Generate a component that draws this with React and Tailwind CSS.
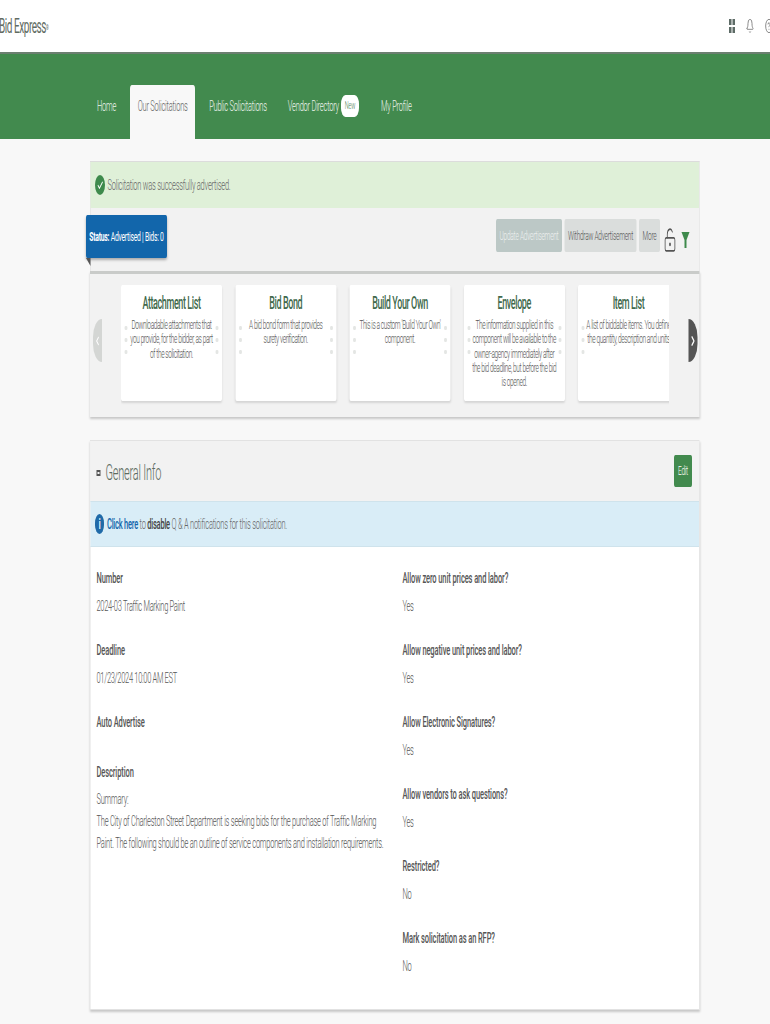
import React from "react";
import { Bell, Check, ChevronLeft, ChevronRight, CircleHelp, LockKeyholeOpen } from "lucide-react";

const cards = [
  ["Attachment List", "Downloadable attachments that\nyou provide, for the bidder, as part\nof the solicitation."],
  ["Bid Bond", "A bid bond form that provides\nsurety verification."],
  ["Build Your Own", "This is a custom 'Build Your Own'\ncomponent."],
  ["Envelope", "The information supplied in this\ncomponent will be available to the\nowner-agency immediately after\nthe bid deadline, but before the bid\nis opened."],
  ["Item List", "A list of biddable items. You define\nthe quantity, description and units"],
];

const leftFields = [
  ["Number", "2024-03 Traffic Marking Paint"],
  ["Deadline", "01/23/2024 10:00 AM EST"],
];

const rightFields = [
  ["Allow zero unit prices and labor?", "Yes"],
  ["Allow negative unit prices and labor?", "Yes"],
  ["Allow Electronic Signatures?", "Yes"],
  ["Allow vendors to ask questions?", "Yes"],
  ["Restricted?", "No"],
  ["Mark solicitation as an RFP?", "No"],
];

function Dots({ className }) {
  return (
    <div className={"absolute top-[41px] flex flex-col gap-[8px] " + className}>
      <span className="h-[4px] w-[6px] rounded-full bg-[#e4e6e4]" />
      <span className="h-[4px] w-[6px] rounded-full bg-[#e4e6e4]" />
      <span className="h-[4px] w-[6px] rounded-full bg-[#e4e6e4]" />
    </div>
  );
}

function Card({ title, text, clipped }) {
  return (
    <div className="relative h-[116px] w-[202px] shrink-0 rounded-[3px] bg-white px-[6px] pt-[8px] text-center shadow-[0_2px_3px_rgba(0,0,0,0.12)]">
      <div className="text-[18px] font-medium leading-[20px] tracking-[-0.8px] text-[#41694c]">{title}</div>
      <p className="mt-[5px] whitespace-pre-line text-[13px] font-light leading-[14.3px] tracking-[-0.75px] text-[#555]">{text}</p>
      <Dots className="left-[7px]" />
      {!clipped && <Dots className="right-[7px]" />}
    </div>
  );
}

function Field({ label, value, className }) {
  return (
    <div className={className}>
      <div className="text-[15px] font-medium leading-[20px] tracking-[-0.2px] text-[#555]">{label}</div>
      {value && <div className="mt-[8px] text-[15px] font-light leading-[20px] tracking-[-0.6px] text-[#555]">{value}</div>}
    </div>
  );
}

export default function App() {
  return (
    <div className="h-[1024px] w-[770px] overflow-hidden">
      {/* the reference is squeezed to half its width, so lay out at 1540 and scale */}
      <div className="h-[1024px] w-[1540px] origin-top-left scale-x-50 overflow-hidden bg-[#f8f8f8] font-['Roboto',sans-serif] font-light tracking-[-0.45px] text-[#555]">
        <header className="flex h-[52px] items-center justify-between bg-white">
          <div className="-ml-[2px] text-[20px] font-normal tracking-[-0.9px] text-[#5f6b62]">
            Bid Express<sup className="text-[7px]">®</sup>
          </div>
          <div className="-mr-[6px] flex items-center gap-[22px] text-[#666]">
            <svg width="12" height="14" viewBox="0 0 12 14" fill="#5d6b66">
              <rect x="0" y="0" width="5" height="6" />
              <rect x="7" y="0" width="5" height="6" />
              <rect x="0" y="8" width="5" height="6" />
              <rect x="7" y="8" width="5" height="6" />
            </svg>
            <Bell size={16} strokeWidth={1.5} />
            <CircleHelp size={16} strokeWidth={1.5} />
          </div>
        </header>

        <nav className="flex h-[87px] items-end border-t-2 border-[#6b7f70] bg-[#428a4e] pl-[176px] text-[15px] text-[#eef5ef]">
          <div className="flex h-[54px] items-center px-[18px] pb-[12px]">Home</div>
          <div className="ml-[10px] flex h-[54px] w-[130px] items-center justify-center rounded-t-[4px] bg-[#f8f8f8] pb-[12px] text-[#666]">Our Solicitations</div>
          <div className="ml-[28px] flex h-[54px] items-center pb-[12px]">Public Solicitations</div>
          <div className="ml-[42px] flex h-[54px] items-center pb-[12px]">
            Vendor Directory
            <span className="ml-[4px] flex h-[22px] w-[36px] items-center justify-center rounded-[9px] bg-white text-[11px] text-[#4a7d55]">New</span>
          </div>
          <div className="ml-[44px] flex h-[54px] items-center pb-[12px]">My Profile</div>
        </nav>

        <main className="px-[180px] pt-[22px]">
          <section className="relative w-[1219px] border-x border-t border-[#dcdcdc] bg-[#f2f2f2]">
            <div className="flex h-[46px] items-center gap-[5px] bg-[#dff0d8] pl-[9px] text-[15px] text-[#666]">
              <span className="flex h-[20px] w-[20px] items-center justify-center rounded-full bg-[#3e8a4c]">
                <Check size={13} strokeWidth={3} className="text-white" />
              </span>
              Solicitation was successfully advertised.
            </div>
            <div className="flex h-[63px] items-center justify-end gap-[5px] pr-[18px] pb-[8px] text-[13px]">
              <button className="flex h-[33px] w-[132px] items-center justify-center rounded-[3px] bg-[#bcc8c6] text-[#eef1f0]">Update Advertisement</button>
              <button className="flex h-[33px] w-[144px] items-center justify-center rounded-[3px] bg-[#dadddc] text-[#555]">Withdraw Advertisement</button>
              <button className="flex h-[33px] w-[42px] items-center justify-center rounded-[3px] bg-[#dadddc] text-[#555]">More</button>
              <LockKeyholeOpen size={26} strokeWidth={1.5} className="mt-[8px] ml-[2px] text-[#555]" />
              <svg width="18" height="18" viewBox="0 0 18 18" className="mt-[8px] ml-[4px]" fill="#3e8a4c">
                <path d="M1 1h16l-6 8v8h-4v-8z" />
              </svg>
            </div>
            <div className="absolute top-[53px] -left-[9px] flex h-[43px] w-[162px] items-center justify-center rounded-[3px] bg-[#1266ab] text-[13.5px] font-normal text-white shadow-[0_2px_4px_rgba(0,0,0,0.3)]">
              <span><b className="font-bold">Status:</b> Advertised | Bids: 0</span>
            </div>
            <div className="absolute top-[96px] -left-[9px] h-0 w-0 border-t-[8px] border-l-[9px] border-t-[#555] border-l-transparent" />
          </section>

          <section className="relative h-[146px] w-[1219px] border-t-[3px] border-[#c9cbc9] bg-[#f2f2f2] pt-[11px] pl-[62px] shadow-[0_2px_3px_rgba(0,0,0,0.2)]">
            <div className="flex w-[1096px] gap-[26.5px] overflow-hidden pb-[4px]">
              {cards.map(([title, text], i) => (
                <Card key={title} title={title} text={text} clipped={i === 4} />
              ))}
            </div>
            <div className="absolute top-[45px] left-[6px] flex h-[43px] w-[18px] items-center justify-center rounded-l-full bg-[#d4d6d4] text-white">
              <ChevronLeft size={14} strokeWidth={3} />
            </div>
            <div className="absolute top-[45px] right-[4px] flex h-[43px] w-[18px] items-center justify-center rounded-r-full bg-[#555] text-white">
              <ChevronRight size={16} strokeWidth={3} />
            </div>
          </section>

          <section className="mt-[23px] h-[570px] w-[1219px] border border-[#e2e2e2] bg-white shadow-[0_2px_3px_rgba(0,0,0,0.2)]">
            <div className="flex h-[60px] items-center justify-between bg-[#f2f2f2] pr-[14px] pl-[12px]">
              <div className="flex items-center gap-[10px] pt-[3px] text-[22px] text-[#5c6b60]">
                <span className="h-[6px] w-[8px] border-2 border-[#555]" />
                General Info
              </div>
              <button className="flex h-[32px] w-[36px] items-center justify-center rounded-[3px] bg-[#428a4e] text-[13px] text-white">Edit</button>
            </div>
            <div className="flex h-[46px] items-center gap-[6px] border-y border-[#cfe3ec] bg-[#d9edf7] pl-[9px] text-[15px] text-[#666]">
              <span className="flex h-[20px] w-[18px] items-center justify-center rounded-full bg-[#1f6aa8] text-[14px] font-bold text-white">i</span>
              <span>
                <b className="font-medium text-[#1266ab]">Click here</b> to <b className="font-medium text-[#444]">disable</b> Q &amp; A notifications for this solicitation.
              </span>
            </div>
            <div className="grid grid-cols-[612px_1fr] pt-[21px] pl-[12px]">
              <div>
                {leftFields.map(([label, value]) => (
                  <Field key={label} label={label} value={value} className="mb-[24px]" />
                ))}
                <Field label="Auto Advertise" className="mb-[30px]" />
                <Field label="Description" />
                <div className="mt-[6px] w-[575px] text-[15px] leading-[22px] tracking-[-0.45px] text-[#555]">
                  Summary:
                  <br />
                  The City of Charleston Street Department is seeking bids for the purchase of Traffic Marking
                  <br />
                  Paint. The following should be an outline of service components and installation requirements.
                </div>
              </div>
              <div>
                {rightFields.map(([label, value]) => (
                  <Field key={label} label={label} value={value} className="mb-[24px]" />
                ))}
              </div>
            </div>
          </section>
        </main>
      </div>
    </div>
  );
}
